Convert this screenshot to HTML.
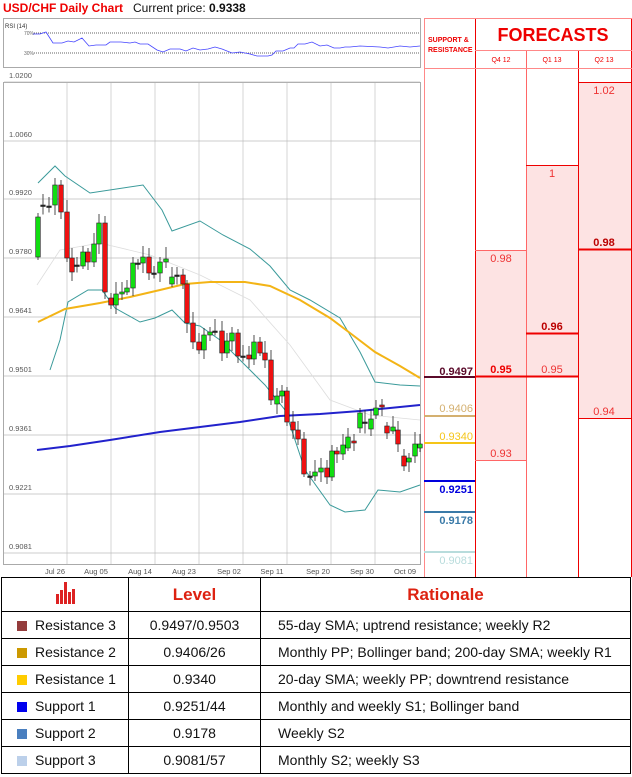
<!DOCTYPE html>
<html><head><meta charset="utf-8"><style>
body{margin:0;width:632px;height:777px;background:#fff;font-family:"Liberation Sans",sans-serif;position:relative;overflow:hidden}
.a{position:absolute}
table{border-collapse:collapse;position:absolute;left:1px;top:577px;width:630px}
td{border:1px solid #000;font-size:14px;color:#111;height:26px;padding:0}
td.c{text-align:center}
.sq{display:inline-block;width:10px;height:10px;margin:0 8px 0 15px;vertical-align:-1px}
</style></head><body>
<div class="a" style="left:3px;top:1px;font-size:12px;font-weight:bold;color:#e00">USD/CHF Daily Chart</div>
<div class="a" style="left:133px;top:1px;font-size:12px;color:#111">Current price: <b>0.9338</b></div>
<svg class="a" style="left:0;top:0" width="632" height="580" id="s">
<rect x="3.5" y="18.5" width="417" height="49" fill="#fff" stroke="#aaa"/>
<text x="5" y="28" font-size="6" fill="#333">RSI (14)</text>
<text x="24" y="35" font-size="5" fill="#666">70%</text><text x="24" y="55" font-size="5" fill="#666">30%</text>
<line x1="34" y1="33" x2="420" y2="33" stroke="#666" stroke-dasharray="1,1"/>
<line x1="34" y1="53" x2="420" y2="53" stroke="#666" stroke-dasharray="1,1"/>
<polyline fill="none" stroke="#44f" stroke-width="0.8" points="33,34 40,34 46,32 53,43 62,43 68,41 74,42 82,38 89,46 96,45 106,45 110,42 121,42 130,43 135,42 140,44 148,44 157,50 163,52 170,49 180,49 186,51 193,48 200,50 208,49 215,47 222,49 232,53 240,52 250,54 257,56 268,56 272,55 276,51 283,51 290,48 294,48 298,44 305,44 312,42 320,46 327,45 334,48 340,48 345,47 350,47 360,46 380,47 388,48 400,46 410,47 420,46"/>
<rect x="3.5" y="82.5" width="417" height="482" fill="#fff" stroke="#aaa"/>
<g id="grid" stroke="#bbb" stroke-width="0.8"></g>
<g id="lbl" font-size="7.5" fill="#555"></g>
<polyline fill="none" stroke="#ddd" stroke-width="0.8" points="37,285 60,250 100,243 150,255 200,275 250,300 290,345 330,400 370,415 420,420"/>
<polyline fill="none" stroke="#3a9a9a" stroke-width="1" points="38,183 55,166 65,176 90,193 143,185 162,210 172,231 200,221 223,235 250,249 270,266 290,290 310,300 340,318 360,352 375,382 400,385 420,386"/>
<polyline fill="none" stroke="#3a9a9a" stroke-width="1" points="50,370 60,340 68,302 88,290 102,290 115,308 140,322 155,318 172,310 185,323 200,326 220,340 245,365 265,385 285,410 305,470 330,505 345,512 365,510 378,490 400,492 420,485"/>
<polyline fill="none" stroke="#f3b416" stroke-width="2" points="38,322 65,309 100,303 130,297 160,290 185,284 210,282 245,282 270,286 300,300 330,318 350,333 375,352 400,366 420,378"/>
<polyline fill="none" stroke="#22c" stroke-width="2" points="37,450 70,446 110,440 160,432 200,427 240,422 280,416 320,414 360,411 390,408 420,405"/>
<g id="cd"></g>
<g font-size="7.5" fill="#555" text-anchor="middle"><text x="55" y="574">Jul 26</text><text x="96" y="574">Aug 05</text><text x="140" y="574">Aug 14</text><text x="184" y="574">Aug 23</text><text x="229" y="574">Sep 02</text><text x="272" y="574">Sep 11</text><text x="318" y="574">Sep 20</text><text x="362" y="574">Sep 30</text><text x="405" y="574">Oct 09</text></g>
<rect x="475" y="250" width="51" height="210" fill="#fde3e3"/>
<rect x="526" y="165" width="52" height="211" fill="#fde3e3"/>
<rect x="578" y="82" width="53" height="336" fill="#fde3e3"/>
<g stroke="#e00" stroke-width="1">
<line x1="424.5" y1="18" x2="424.5" y2="577" stroke="#f88"/>
<line x1="475.5" y1="18" x2="475.5" y2="577"/>
<line x1="526.5" y1="50" x2="526.5" y2="577" stroke="#f66"/>
<line x1="578.5" y1="50" x2="578.5" y2="577"/>
<line x1="631.5" y1="18" x2="631.5" y2="577"/>
<line x1="424" y1="18.5" x2="632" y2="18.5" stroke="#f88"/>
<line x1="475" y1="50.5" x2="632" y2="50.5" stroke="#f88"/>
<line x1="424" y1="68.5" x2="632" y2="68.5" stroke="#f88"/>
<line x1="475" y1="250.5" x2="526" y2="250.5" stroke="#f66"/>
<line x1="475" y1="460.5" x2="526" y2="460.5" stroke="#f66"/>
<line x1="475" y1="376.5" x2="578" y2="376.5" stroke-width="2"/>
<line x1="526" y1="165.5" x2="578" y2="165.5"/>
<line x1="526" y1="333.5" x2="578" y2="333.5" stroke-width="2"/>
<line x1="578" y1="249.5" x2="631" y2="249.5" stroke-width="2"/>
<line x1="578" y1="82.5" x2="631" y2="82.5"/>
<line x1="578" y1="418.5" x2="631" y2="418.5"/>
</g>
<text x="428" y="42" font-size="7" font-weight="bold" fill="#e00">SUPPORT &amp;</text>
<text x="428" y="52" font-size="7" font-weight="bold" fill="#e00">RESISTANCE</text>
<text x="553" y="41" font-size="18" font-weight="bold" fill="#e00" text-anchor="middle">FORECASTS</text>
<g font-size="7" fill="#e00" text-anchor="middle"><text x="501" y="62">Q4 12</text><text x="552" y="62">Q1 13</text><text x="604" y="62">Q2 13</text></g>
<g font-size="11" fill="#e33" text-anchor="middle">
<text x="501" y="262">0.98</text><text x="501" y="373" font-weight="bold" fill="#e00">0.95</text><text x="501" y="457">0.93</text>
<text x="552" y="177">1</text><text x="552" y="330" font-weight="bold" fill="#b00">0.96</text><text x="552" y="373">0.95</text>
<text x="604" y="94">1.02</text><text x="604" y="246" font-weight="bold" fill="#b00">0.98</text><text x="604" y="415">0.94</text></g>
<g stroke-width="2"><line x1="424" y1="377" x2="475" y2="377" stroke="#5a0a2a"/><line x1="424" y1="416" x2="475" y2="416" stroke="#d4b070"/><line x1="424" y1="443" x2="475" y2="443" stroke="#f5c518"/><line x1="424" y1="481" x2="475" y2="481" stroke="#00d"/><line x1="424" y1="512" x2="475" y2="512" stroke="#3a7aa8"/><line x1="424" y1="552" x2="475" y2="552" stroke="#b8dcdc"/></g>
<g font-size="11" text-anchor="end" font-weight="bold"><text x="473" y="375" fill="#5a0a2a">0.9497</text><text x="473" y="412" fill="#d4b070" font-weight="normal">0.9406</text><text x="473" y="440" fill="#f5c518" font-weight="normal">0.9340</text><text x="473" y="493" fill="#00d">0.9251</text><text x="473" y="524" fill="#3a7aa8">0.9178</text><text x="473" y="564" fill="#b8dcdc" font-weight="normal">0.9081</text></g>
</svg>
<table>
<tr style="height:34px"><td style="width:126px" class="c"><svg width="22" height="22"><g fill="#d22"><rect x="2" y="12" width="3" height="10"/><rect x="6" y="8" width="3" height="14"/><rect x="10" y="0" width="3" height="22"/><rect x="14" y="10" width="3" height="12"/><rect x="18" y="7" width="3" height="15"/></g></svg></td><td style="width:131px;font-size:17px;font-weight:bold;color:#d21" class="c">Level</td><td style="font-size:17px;font-weight:bold;color:#d21" class="c">Rationale</td></tr>
<tr><td><span class="sq" style="background:#943c3c"></span>Resistance 3</td><td class="c">0.9497/0.9503</td><td style="padding-left:17px">55-day SMA; uptrend resistance; weekly R2</td></tr>
<tr><td><span class="sq" style="background:#cc9900"></span>Resistance 2</td><td class="c">0.9406/26</td><td style="padding-left:17px">Monthly PP; Bollinger band; 200-day SMA; weekly R1</td></tr>
<tr><td><span class="sq" style="background:#ffcc00"></span>Resistance 1</td><td class="c">0.9340</td><td style="padding-left:17px">20-day SMA; weekly PP; downtrend resistance</td></tr>
<tr><td><span class="sq" style="background:#0000ee"></span>Support 1</td><td class="c">0.9251/44</td><td style="padding-left:17px">Monthly and weekly S1; Bollinger band</td></tr>
<tr><td><span class="sq" style="background:#4a7fbf"></span>Support 2</td><td class="c">0.9178</td><td style="padding-left:17px">Weekly S2</td></tr>
<tr><td><span class="sq" style="background:#bcd0ea"></span>Support 3</td><td class="c">0.9081/57</td><td style="padding-left:17px">Monthly S2; weekly S3</td></tr>
</table>
<script>
(function(){
var ns="http://www.w3.org/2000/svg";
function el(p,t,a){var e=document.createElementNS(ns,t);for(var k in a)e.setAttribute(k,a[k]);document.getElementById(p).appendChild(e);return e;}
var levels=[["1.0200",82],["1.0060",141],["0.9920",199],["0.9780",258],["0.9641",317],["0.9501",376],["0.9361",435],["0.9221",494],["0.9081",553]];
levels.forEach(function(l){el("grid","line",{x1:4,x2:420,y1:l[1],y2:l[1]});var t=el("lbl","text",{x:9,y:l[1]-4});t.textContent=l[0];});
[67,111,155,199,243,287,331,375].forEach(function(x){el("grid","line",{x1:x,x2:x,y1:83,y2:564,"stroke-width":0.6});});
var d=[[38,257,217],[43,206,205],[49,206,206],[55,205,185],[61,185,212],[67,212,258],[72,258,272],[77,265,265],[83,266,252],[88,252,262],[94,262,244],[99,244,223],[105,223,292],[111,298,305],[116,305,294],[122,294,292],[127,292,288],[133,288,263],[138,263,263],[143,263,257],[149,257,273],[154,273,273],[160,273,262],[166,262,259],[172,284,277],[177,276,275],[183,275,284],
[187,284,323],[193,323,342],[199,342,350],[204,350,335],[210,335,332],[215,332,331],[222,331,353],[227,353,341],[232,341,333],[238,333,356],[243,356,356],[249,355,359],[254,359,342],[260,342,353],[265,353,360],[271,360,400],[277,404,396],[282,396,391],[287,391,422],[293,422,430],[298,430,439],[304,439,474],[310,476,476],[315,476,472],[321,472,468],[327,468,477],[332,477,451],[337,451,454],[343,454,445],[348,448,437],[354,441,443],[360,428,413],[365,422,422],[371,429,419],[376,415,408],[382,405,407],[387,426,433],[393,431,427],[398,430,444],[404,456,466],[409,462,458],[415,456,444],[420,448,444]];
d.forEach(function(c,i){var hi=Math.min(c[1],c[2]),lo=Math.max(c[1],c[2]);var up=c[2]<c[1],flat=lo-hi<2;if(flat)lo=hi+1.5;
var w1=4+(i*7%9),w2=3+(i*5%8);
el("cd","line",{x1:c[0],x2:c[0],y1:hi-w1,y2:lo+w2,stroke:"#222","stroke-width":0.8});
el("cd","rect",{x:c[0]-2.3,y:hi,width:4.6,height:lo-hi,fill:flat?"#222":(up?"#1d1":"#e11"),stroke:"#222","stroke-width":0.6});});
})();
</script>
</body></html>
